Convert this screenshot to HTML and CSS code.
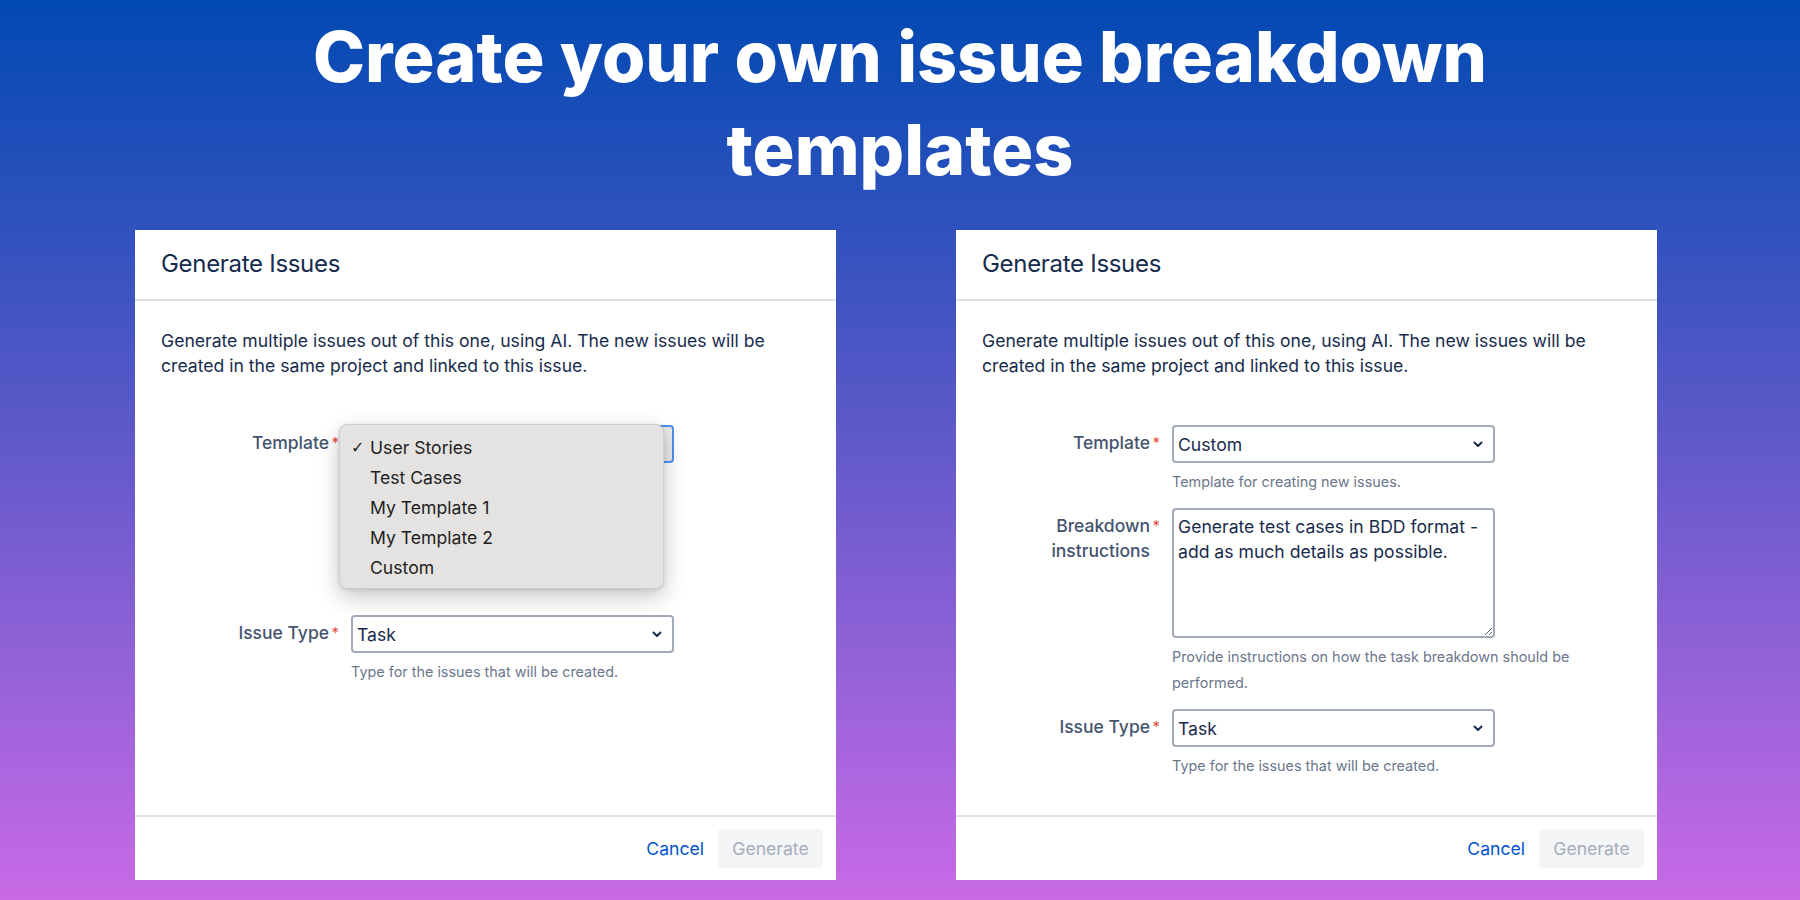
FILE: index.html
```html
<!DOCTYPE html>
<html lang="en">
<head>
<meta charset="utf-8">
<title>Create your own issue breakdown templates</title>
<link rel="stylesheet" href="styles.css">
</head>
<body>
<main class="page">
  <h1 class="headline">Create your own issue breakdown templates</h1>
  <div class="cards">
    <section class="dialog">
      <header class="dialog-header"><h2 class="dialog-title">Generate Issues</h2></header>
      <div class="dialog-body">
        <p class="intro">Generate multiple issues out of this one, using AI. The new issues will be created in the same project and linked to this issue.</p>
        <div class="form">
          <div class="field">
            <label class="field-label required">Template</label>
            <div class="field-control">
              <div class="select select--focused">
                <span class="select-value"></span>
                <svg class="chevron" width="10" height="7" viewBox="0 0 10 7"><path d="M1.5 1.5L5 5l3.5-3.5" fill="none" stroke="#172b4d" stroke-width="2" stroke-linecap="round" stroke-linejoin="round"/></svg>
              </div>
              <ul class="popup">
                <li class="popup-item"><span class="check">✓</span>User Stories</li>
                <li class="popup-item"><span class="check"></span>Test Cases</li>
                <li class="popup-item"><span class="check"></span>My Template 1</li>
                <li class="popup-item"><span class="check"></span>My Template 2</li>
                <li class="popup-item"><span class="check"></span>Custom</li>
              </ul>
            </div>
          </div>
          <div class="field field--spaced">
            <label class="field-label required">Issue Type</label>
            <div class="field-control">
              <div class="select">
                <span class="select-value">Task</span>
                <svg class="chevron" width="10" height="7" viewBox="0 0 10 7"><path d="M1.5 1.5L5 5l3.5-3.5" fill="none" stroke="#172b4d" stroke-width="2" stroke-linecap="round" stroke-linejoin="round"/></svg>
              </div>
              <div class="help">Type for the issues that will be created.</div>
            </div>
          </div>
        </div>
      </div>
      <footer class="dialog-footer">
        <button class="btn btn-link" type="button">Cancel</button>
        <button class="btn btn-disabled" type="button">Generate</button>
      </footer>
    </section>

    <section class="dialog">
      <header class="dialog-header"><h2 class="dialog-title">Generate Issues</h2></header>
      <div class="dialog-body">
        <p class="intro">Generate multiple issues out of this one, using AI. The new issues will be created in the same project and linked to this issue.</p>
        <div class="form">
          <div class="field">
            <label class="field-label required">Template</label>
            <div class="field-control">
              <div class="select">
                <span class="select-value">Custom</span>
                <svg class="chevron" width="10" height="7" viewBox="0 0 10 7"><path d="M1.5 1.5L5 5l3.5-3.5" fill="none" stroke="#172b4d" stroke-width="2" stroke-linecap="round" stroke-linejoin="round"/></svg>
              </div>
              <div class="help">Template for creating new issues.</div>
            </div>
          </div>
          <div class="field">
            <label class="field-label required">Breakdown instructions</label>
            <div class="field-control">
              <textarea class="textarea" readonly>Generate test cases in BDD format - add as much details as possible.</textarea>
              <div class="help">Provide instructions on how the task breakdown should be performed.</div>
            </div>
          </div>
          <div class="field">
            <label class="field-label required">Issue Type</label>
            <div class="field-control">
              <div class="select">
                <span class="select-value">Task</span>
                <svg class="chevron" width="10" height="7" viewBox="0 0 10 7"><path d="M1.5 1.5L5 5l3.5-3.5" fill="none" stroke="#172b4d" stroke-width="2" stroke-linecap="round" stroke-linejoin="round"/></svg>
              </div>
              <div class="help">Type for the issues that will be created.</div>
            </div>
          </div>
        </div>
      </div>
      <footer class="dialog-footer">
        <button class="btn btn-link" type="button">Cancel</button>
        <button class="btn btn-disabled" type="button">Generate</button>
      </footer>
    </section>
  </div>
</main>
</body>
</html>
```

FILE: styles.css
```css
* { box-sizing: border-box; }

html, body {
  margin: 0;
  padding: 0;
}

body {
  width: 1800px;
  height: 900px;
  overflow: hidden;
  background: linear-gradient(180deg, #0249b3 0%, #3152bd 26%, #c96ae6 100%);
  font-family: Inter, "Noto Sans", sans-serif;
  color: #172b4d;
}

.page {
  padding-top: 10px;
}

.headline {
  margin: 0 auto;
  width: 1300px;
  text-align: center;
  color: #ffffff;
  font-family: Inter, "Noto Sans", sans-serif;
  font-weight: 800;
  font-size: 70px;
  line-height: 93px;
  letter-spacing: 0;
}

.cards {
  display: flex;
  gap: 120px;
  padding-left: 135px;
  margin-top: 34px;
}

.dialog {
  width: 701px;
  height: 650px;
  background: #ffffff;
  display: flex;
  flex-direction: column;
}

.dialog-header {
  padding: 19px 26px 20px;
  border-bottom: 2px solid #dfe1e6;
}

.dialog-title {
  margin: 0;
  font-size: 24px;
  line-height: 30px;
  font-weight: 400;
  color: #172b4d;
  letter-spacing: -0.3px;
}

.dialog-body {
  flex: 1;
  padding: 27px 26px 0;
}

.intro {
  margin: 0;
  font-size: 17.6px;
  line-height: 25px;
  color: #172b4d;
}

.form {
  margin-top: 47px;
  display: flex;
  flex-direction: column;
  gap: 13px;
}

.field {
  display: grid;
  grid-template-columns: 177px 1fr;
  column-gap: 13px;
}

.field--spaced {
  margin-top: 139px;
}

.field-label {
  position: relative;
  text-align: right;
  padding: 5px 9px 0 0;
  font-size: 17.5px;
  line-height: 25px;
  font-weight: 500;
  color: #44546f;
}

.required::after {
  content: "*";
  position: absolute;
  right: -1px;
  top: 10px;
  font-size: 15px;
  line-height: 15px;
  font-weight: 400;
  color: #e2503f;
}

.field-control {
  position: relative;
}

.select {
  width: 323px;
  height: 38px;
  border: 2px solid #a2aaba;
  border-radius: 4px;
  background: #ffffff;
  display: flex;
  align-items: center;
  justify-content: space-between;
  padding: 0 10px 0 4px;
}

.select--focused {
  border-color: #4c8ff5;
  background: #e9e9ea;
}

.select-value {
  font-size: 17.6px;
  color: #172b4d;
}

.chevron {
  display: block;
  flex: none;
}

.textarea {
  display: block;
  width: 323px;
  height: 130px;
  border: 2px solid #a2aaba;
  border-radius: 4px;
  padding: 4px 4px;
  margin: 0;
  font-family: Inter, "Noto Sans", sans-serif;
  font-size: 17.6px;
  line-height: 25px;
  color: #172b4d;
  background: #ffffff;
  resize: vertical;
  outline: none;
}

.help {
  margin-top: 6px;
  font-size: 14.4px;
  line-height: 26px;
  color: #6b778c;
}

.popup {
  position: absolute;
  left: -12px;
  top: -1px;
  width: 325px;
  margin: 0;
  padding: 7px 0 6px;
  list-style: none;
  background: #e4e3e1;
  border: 1px solid #cfcdcb;
  border-radius: 8px;
  box-shadow: 0 8px 22px rgba(0, 0, 0, 0.22), 0 1px 4px rgba(0, 0, 0, 0.1);
}

.popup-item {
  display: flex;
  align-items: center;
  height: 30px;
  padding-left: 11px;
  font-size: 17.6px;
  color: #1e1e1e;
}

.check {
  display: inline-block;
  width: 19px;
  font-family: "DejaVu Sans", sans-serif;
  font-weight: 700;
  font-size: 16px;
}

.dialog-footer {
  height: 65px;
  border-top: 2px solid #dfe1e6;
  display: flex;
  justify-content: flex-end;
  align-items: center;
  gap: 6px;
  padding: 0 13px 0 0;
}

.btn {
  font-family: Inter, "Noto Sans", sans-serif;
  font-size: 17.6px;
  height: 39px;
  border: none;
  border-radius: 4px;
  background: transparent;
  cursor: pointer;
}

.btn-link {
  color: #0052cc;
  padding: 0 8px;
}

.btn-disabled {
  width: 105px;
  padding: 0;
  color: #a5adba;
  background: #f4f5f7;
}
```
